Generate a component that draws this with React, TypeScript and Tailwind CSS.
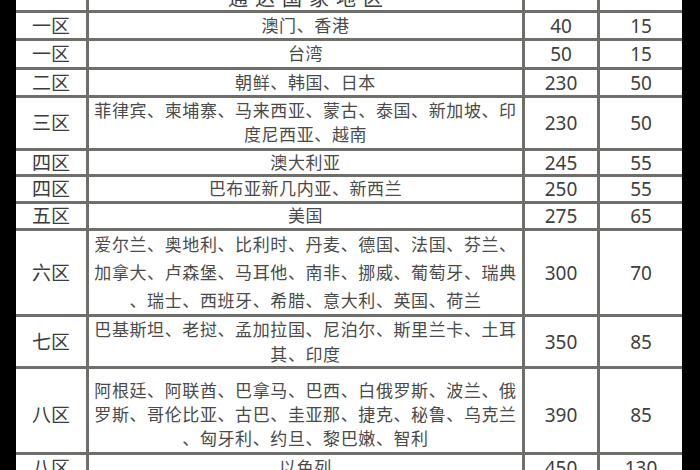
import React from "react";

type Row = {
  zone: string;
  lines: string[];
  a: string;
  b: string;
  h: string;
  lh?: string;
  pt?: string;
};

const rows: Row[] = [
  { zone: "一区", lines: ["澳门、香港"], a: "40", b: "15", h: "h-[25px]" },
  { zone: "一区", lines: ["台湾"], a: "50", b: "15", h: "h-[26px]" },
  { zone: "二区", lines: ["朝鲜、韩国、日本"], a: "230", b: "50", h: "h-[25px]" },
  {
    zone: "三区",
    lines: ["菲律宾、柬埔寨、马来西亚、蒙古、泰国、新加坡、印", "度尼西亚、越南"],
    a: "230",
    b: "50",
    h: "h-[50px]",
    lh: "leading-[24px]",
  },
  { zone: "四区", lines: ["澳大利亚"], a: "245", b: "55", h: "h-[23px]" },
  { zone: "四区", lines: ["巴布亚新几内亚、新西兰"], a: "250", b: "55", h: "h-[24px]" },
  { zone: "五区", lines: ["美国"], a: "275", b: "65", h: "h-[24px]" },
  {
    zone: "六区",
    lines: [
      "爱尔兰、奥地利、比利时、丹麦、德国、法国、芬兰、",
      "加拿大、卢森堡、马耳他、南非、挪威、葡萄牙、瑞典",
      "、瑞士、西班牙、希腊、意大利、英国、荷兰",
    ],
    a: "300",
    b: "70",
    h: "h-[83px]",
    lh: "leading-[28px]",
  },
  {
    zone: "七区",
    lines: ["巴基斯坦、老挝、孟加拉国、尼泊尔、斯里兰卡、土耳", "其、印度"],
    a: "350",
    b: "85",
    h: "h-[49px]",
    lh: "leading-[25px]",
  },
  {
    zone: "八区",
    lines: [
      "阿根廷、阿联酋、巴拿马、巴西、白俄罗斯、波兰、俄",
      "罗斯、哥伦比亚、古巴、圭亚那、捷克、秘鲁、乌克兰",
      "、匈牙利、约旦、黎巴嫩、智利",
    ],
    a: "390",
    b: "85",
    h: "h-[83px]",
    lh: "leading-[24px]",
    pt: "pt-[8px]",
  },
  { zone: "八区", lines: ["以色列"], a: "450", b: "130", h: "h-[26px]" },
];

const font = { fontFamily: '"Noto Sans", "Noto Sans CJK SC", sans-serif' };

export default function App() {
  return (
    <div className="w-[700px] h-[470px] overflow-hidden bg-black" style={font}>
      <div className="ml-[16px] w-[666px] -mt-[20px] grid grid-cols-[70px_433px_72px_82px] gap-[3px] bg-[#6e6e6a]">
        {/* header */}
        <div className="bg-white h-[30px]" />
        <div className="bg-white h-[30px] flex items-end justify-center pb-[1px]">
          <span className="text-[20px] leading-[20px] tracking-[7px] text-[#404040] pl-[7px]">
            通达国家地区
          </span>
        </div>
        <div className="bg-white h-[30px]" />
        <div className="bg-white h-[30px]" />
        {rows.map((r, i) => (
          <React.Fragment key={i}>
            <div
              className={`bg-white ${r.h} ${r.pt ?? ""} flex items-center justify-center text-[19px] leading-[22px] text-[#3c3c3c]`}
            >
              {r.zone}
            </div>
            <div
              className={`bg-white ${r.h} ${r.pt ?? ""} flex flex-col items-center justify-center text-[17px] tracking-[0.6px] text-[#4a4a4a] ${r.lh ?? "leading-[22px]"}`}
            >
              {r.lines.map((l, j) => (
                <div key={j} className="whitespace-nowrap">
                  {l}
                </div>
              ))}
            </div>
            <div
              className={`bg-white ${r.h} ${r.pt ?? ""} flex items-center justify-center text-[19px] leading-[22px] text-[#404040]`}
            >
              {r.a}
            </div>
            <div
              className={`bg-white ${r.h} ${r.pt ?? ""} flex items-center justify-center text-[19px] leading-[22px] text-[#404040]`}
            >
              {r.b}
            </div>
          </React.Fragment>
        ))}
      </div>
    </div>
  );
}
